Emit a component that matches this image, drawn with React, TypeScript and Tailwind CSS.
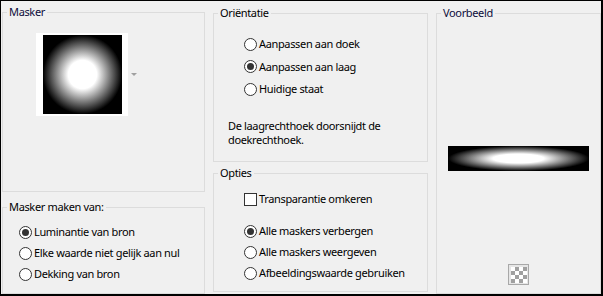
import React from 'react';

const font = { fontFamily: '"Noto Sans", "Open Sans", sans-serif' };

const Radio = ({ checked }: { checked?: boolean }) => (
  <span className="w-[13px] h-[13px] rounded-full border border-[#333] bg-white flex items-center justify-center shrink-0">
    {checked && <span className="w-[7px] h-[7px] rounded-full bg-[#333]" />}
  </span>
);

const Option = ({ label, checked, h = 'h-[21px]' }: { label: string; checked?: boolean; h?: string }) => (
  <div className={`flex items-center gap-[2px] whitespace-nowrap ${h}`}>
    <Radio checked={checked} />
    <span>{label}</span>
  </div>
);

const Group = ({
  title,
  className,
  titleClass = 'text-black',
  children,
}: {
  title: string;
  className: string;
  titleClass?: string;
  children?: React.ReactNode;
}) => (
  <fieldset className={`border border-[#dcdcdc] p-0 m-0 min-w-0 ${className}`}>
    <legend className={`ml-[4px] px-[2px] leading-[14px] whitespace-nowrap ${titleClass}`}>{title}</legend>
    {children}
  </fieldset>
);

export default function App() {
  return (
    <div
      className="w-[603px] h-[296px] bg-[#f0f0f0] border-t border-l border-r-2 border-b-2 border-black flex text-[11px] tracking-[-0.35px] text-black"
      style={font}
    >
      {/* left column */}
      <div className="ml-[1px] w-[203px] flex flex-col">
        <Group title="Masker" titleClass="text-[#0c0c3a]" className="mt-[4px] h-[187px]">
          <div className="pt-[14px] pl-[33px] flex items-center">
            <div className="w-[92px] h-[83px] bg-white flex items-center justify-center">
              <div className="w-[79px] h-[79px] bg-[radial-gradient(circle_closest-side,#fff_36%,#000_100%)]" />
            </div>
            <div className="ml-[3px] w-0 h-0 border-l-[3px] border-r-[3px] border-t-[3px] border-l-transparent border-r-transparent border-t-[#a0a0a0]" />
          </div>
        </Group>
        <Group title="Masker maken van:" className="mt-[8px] flex-1">
          <div className="pt-[8px] pl-[16px] flex flex-col">
            <Option label="Luminantie van bron" checked />
            <Option label="Elke waarde niet gelijk aan nul" />
            <Option label="Dekking van bron" />
          </div>
        </Group>
      </div>

      {/* middle column */}
      <div className="ml-[8px] w-[215px] flex flex-col">
        <Group title="Oriëntatie" className="mt-[5px] h-[156px]">
          <div className="pt-[13px] pl-[30px] flex flex-col">
            <Option label="Aanpassen aan doek" h="h-[22.5px]" />
            <Option label="Aanpassen aan laag" checked h="h-[22.5px]" />
            <Option label="Huidige staat" h="h-[22.5px]" />
          </div>
          <p className="mt-[18px] pl-[14px] leading-[14px] whitespace-nowrap">
            De laagrechthoek doorsnijdt de
            <br />
            doekrechthoek.
          </p>
        </Group>
        <Group title="Opties" className="mt-[4px] h-[126px]">
          <div className="pt-[9px] pl-[30px] flex flex-col">
            <div className="flex items-center gap-[2px] h-[21px] whitespace-nowrap">
              <span className="w-[13px] h-[13px] border border-[#333] bg-white shrink-0" />
              <span>Transparantie omkeren</span>
            </div>
            <div className="mt-[11px] flex flex-col">
              <Option label="Alle maskers verbergen" checked />
              <Option label="Alle maskers weergeven" />
              <Option label="Afbeeldingswaarde gebruiken" />
            </div>
          </div>
        </Group>
      </div>

      {/* right column */}
      <div className="ml-[8px] w-[165px] flex flex-col">
        <Group title="Voorbeeld" titleClass="text-[#0c0c3a]" className="mt-[5px] flex-1">
          <div className="flex flex-col items-center">
            <div className="mt-[126px] w-[141px] h-[25px] bg-[radial-gradient(ellipse_closest-side,#fff_36%,#000_100%)]" />
            <div className="mt-[93px] w-[21px] h-[21px] border border-[#a8a8a8] bg-[#e6e6e6] flex items-center justify-center">
              <div className="w-[16px] h-[16px] bg-[repeating-conic-gradient(#a0a0a0_0_25%,#fff_0_50%)] bg-[length:8px_8px]" />
            </div>
          </div>
        </Group>
      </div>
    </div>
  );
}
